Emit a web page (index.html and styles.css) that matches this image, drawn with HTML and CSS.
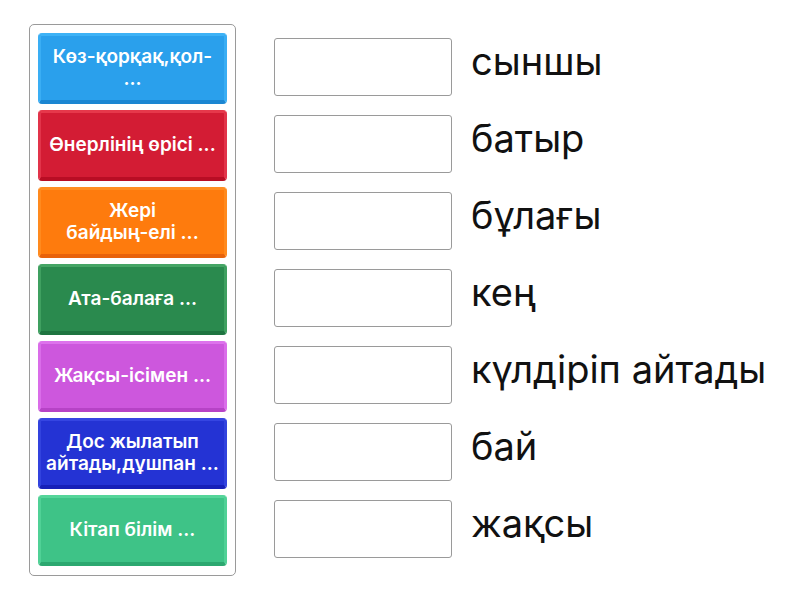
FILE: index.html
```html
<!DOCTYPE html>
<html lang="kk">
<head>
<meta charset="utf-8">
<link rel="stylesheet" href="styles.css">
</head>
<body>
<div class="wrap">
  <div class="panel">
    <div class="tile c1"><span>Көз-қорқақ,қол-<br>...</span></div>
    <div class="tile c2"><span>Өнерлінің өрісі ...</span></div>
    <div class="tile c3"><span>Жері<br>байдың-елі ...</span></div>
    <div class="tile c4"><span>Ата-балаға ...</span></div>
    <div class="tile c5"><span>Жақсы-ісімен ...</span></div>
    <div class="tile c6"><span>Дос жылатып<br>айтады,дұшпан ...</span></div>
    <div class="tile c7"><span>Кітап білім ...</span></div>
  </div>
  <div class="targets">
    <div class="row"><div class="box"></div><div class="label">сыншы</div></div>
    <div class="row"><div class="box"></div><div class="label">батыр</div></div>
    <div class="row"><div class="box"></div><div class="label">бұлағы</div></div>
    <div class="row"><div class="box"></div><div class="label">кең</div></div>
    <div class="row"><div class="box"></div><div class="label">күлдіріп айтады</div></div>
    <div class="row"><div class="box"></div><div class="label">бай</div></div>
    <div class="row"><div class="box"></div><div class="label">жақсы</div></div>
  </div>
</div>
</body>
</html>
```

FILE: styles.css
```css
html, body {
  margin: 0;
  padding: 0;
  background: #ffffff;
}
body {
  font-family: Inter, "Noto Sans", sans-serif;
}
.wrap {
  display: flex;
  padding: 24px 0 0 29px;
  align-items: flex-start;
}
.panel {
  width: 189px;
  padding: 8px 8px 9px 8px;
  border: 1px solid #9a9a9a;
  border-radius: 5px;
  display: flex;
  flex-direction: column;
  gap: 6px;
}
.tile {
  height: 71px;
  box-sizing: border-box;
  border-radius: 4px;
  display: flex;
  align-items: center;
  justify-content: center;
  text-align: center;
  color: #ffffff;
  font-size: 19px;
  font-weight: 600;
  line-height: 22px;
  padding: 0 1px;
  border: 3px solid;
  border-bottom-width: 4px;
  white-space: nowrap;
}
.c1 { background: #2aa0ec; border-color: #3db2f6 #3aaef4 #1b86d2 #3aaef4; }
.c2 { background: #d31c34; border-color: #e6384b #e2344a #b80d24 #e2344a; }
.c3 { background: #fe7b0d; border-color: #ff8d22 #ff8a1e #e8620a #ff8a1e; }
.c4 { background: #2a8a4e; border-color: #45a565 #3fa060 #1e7440 #3fa060; }
.c5 { background: #cd57dd; border-color: #dd72ec #da6de9 #b643c6 #da6de9; }
.c6 { background: #2433d4; border-color: #3545e2 #3243de #1720b8 #3243de; }
.c7 { background: #3ec387; border-color: #55d59a #50d196 #2ca870 #50d196; }
.targets {
  display: flex;
  flex-direction: column;
  gap: 19px;
  margin-left: 38px;
  padding-top: 14px;
}
.row {
  display: flex;
  align-items: center;
  height: 58px;
}
.box {
  width: 176px;
  height: 56px;
  border: 1px solid #9a9a9a;
  border-radius: 3px;
  background: #ffffff;
}
.label {
  margin-left: 19px;
  margin-bottom: 12px;
  font-size: 38px;
  color: #111111;
  white-space: nowrap;
}
```
